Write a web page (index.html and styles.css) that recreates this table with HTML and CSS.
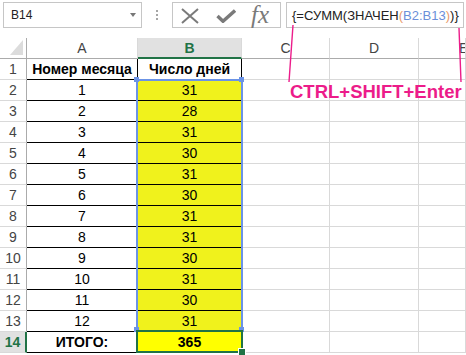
FILE: index.html
```html
<!DOCTYPE html>
<html>
<head>
<meta charset="utf-8">
<link rel="stylesheet" href="styles.css">
</head>
<body>
<div class="bar">
  <div class="namebox"><span>B14</span><span class="caret"></span></div>
  <div class="dots"><i></i><i></i><i></i></div>
  <div class="fn">
    <svg class="ico-x" width="18" height="16" viewBox="0 0 18 16"><path d="M1 1L17 15M17 1L1 15" stroke="#7a7a7a" stroke-width="2" fill="none"/></svg>
    <svg class="ico-ok" width="20" height="14" viewBox="0 0 20 14"><path d="M1.5 7L7 12.3L19 1.5" stroke="#7a7a7a" stroke-width="3.4" fill="none"/></svg>
    <span class="fx">fx</span>
  </div>
  <div class="formula"><span>{=СУММ(ЗНАЧЕН</span><span class="po">(</span><span class="rf">B2:B13</span><span class="po">)</span><span>)}</span></div>
</div>
<div class="sheet">
  <div class="c corner"><span class="tri"></span></div><div class="c ch">A</div><div class="c ch sel">B</div><div class="c ch">C</div><div class="c ch">D</div><div class="c ch last">E</div>
  <div class="c rh">1</div><div class="c t bold">Номер месяца</div><div class="c t bold">Число дней</div><div class="c"></div><div class="c"></div><div class="c"></div>
  <div class="c rh">2</div><div class="c t">1</div><div class="c t y">31</div><div class="c"></div><div class="c"></div><div class="c"></div>
  <div class="c rh">3</div><div class="c t">2</div><div class="c t y">28</div><div class="c"></div><div class="c"></div><div class="c"></div>
  <div class="c rh">4</div><div class="c t">3</div><div class="c t y">31</div><div class="c"></div><div class="c"></div><div class="c"></div>
  <div class="c rh">5</div><div class="c t">4</div><div class="c t y">30</div><div class="c"></div><div class="c"></div><div class="c"></div>
  <div class="c rh">6</div><div class="c t">5</div><div class="c t y">31</div><div class="c"></div><div class="c"></div><div class="c"></div>
  <div class="c rh">7</div><div class="c t">6</div><div class="c t y">30</div><div class="c"></div><div class="c"></div><div class="c"></div>
  <div class="c rh">8</div><div class="c t">7</div><div class="c t y">31</div><div class="c"></div><div class="c"></div><div class="c"></div>
  <div class="c rh">9</div><div class="c t">8</div><div class="c t y">31</div><div class="c"></div><div class="c"></div><div class="c"></div>
  <div class="c rh">10</div><div class="c t">9</div><div class="c t y">30</div><div class="c"></div><div class="c"></div><div class="c"></div>
  <div class="c rh">11</div><div class="c t">10</div><div class="c t y">31</div><div class="c"></div><div class="c"></div><div class="c"></div>
  <div class="c rh">12</div><div class="c t">11</div><div class="c t y">30</div><div class="c"></div><div class="c"></div><div class="c"></div>
  <div class="c rh">13</div><div class="c t">12</div><div class="c t y">31</div><div class="c"></div><div class="c"></div><div class="c"></div>
  <div class="c rh sel">14</div><div class="c t bold">ИТОГО:</div><div class="c t bold yy">365</div><div class="c"></div><div class="c"></div><div class="c"></div>
</div>
<div class="range-blue"></div>
<span class="hd hd-tl"></span><span class="hd hd-tr"></span><span class="hd hd-bl"></span><span class="hd hd-br"></span>
<div class="active"></div>
<span class="fill"></span>
<svg class="lines" width="466" height="355" viewBox="0 0 466 355"><path d="M293 25L289 82M459 28L461 82" stroke="#ec1c8a" stroke-width="1.4" fill="none"/></svg>
<div class="note">CTRL+SHIFT+Enter</div>
</body>
</html>
```
FILE: styles.css
```css
body {
  margin: 0;
  width: 466px;
  height: 355px;
  overflow: hidden;
  background: #fff;
  position: relative;
  font-family: "Liberation Sans", Arial, sans-serif;
}
.bar {
  display: flex;
  align-items: flex-start;
  height: 38px;
  box-sizing: border-box;
  padding-top: 2px;
}
.namebox {
  margin-left: 3px;
  width: 139px;
  height: 26px;
  box-sizing: border-box;
  border: 1px solid #c6c6c6;
  display: flex;
  align-items: center;
  justify-content: space-between;
  padding: 0 5px 0 7px;
  font-size: 12px;
  color: #222;
}
.caret {
  width: 0;
  height: 0;
  border-left: 3.5px solid transparent;
  border-right: 3.5px solid transparent;
  border-top: 4px solid #777;
}
.dots {
  width: 30px;
  display: flex;
  flex-direction: column;
  align-items: center;
  gap: 2px;
  padding-top: 8px;
}
.dots i {
  display: block;
  width: 2px;
  height: 2px;
  background: #a6a6a6;
}
.fn {
  width: 109px;
  height: 26px;
  box-sizing: border-box;
  border: 1px solid #c6c6c6;
  display: flex;
  align-items: center;
}
.ico-x { margin-left: 8px; margin-top: 2px; }
.ico-ok { margin-left: 17px; margin-top: 2px; }
.fx {
  margin-left: 15px;
  font-family: "Liberation Serif", "DejaVu Serif", serif;
  font-style: italic;
  font-size: 25px;
  color: #7a7a7a;
  line-height: 1;
  margin-top: -1px;
}
.formula {
  flex: 1;
  margin-left: 5px;
  margin-right: 2px;
  height: 26px;
  box-sizing: border-box;
  border: 1px solid #c6c6c6;
  padding-left: 5px;
  font-size: 13px;
  color: #222;
  display: flex;
  align-items: center;
  white-space: nowrap;
}
.po { color: #e99a6a; }
.rf { color: #6b8fd9; }
.sheet {
  display: grid;
  grid-template-columns: 27px 111px 104px 88px 89px 1fr;
  grid-auto-rows: 21px;
  overflow: hidden;
}
.c {
  box-sizing: border-box;
  border-right: 1px solid #d9d9d9;
  border-bottom: 1px solid #d9d9d9;
  display: flex;
  align-items: center;
  justify-content: center;
  font-size: 14px;
  color: #000;
  white-space: nowrap;
  overflow: hidden;
}
.corner {
  border-right-color: #ababab;
  border-bottom-color: #ababab;
  position: relative;
}
.tri {
  position: absolute;
  left: 10px;
  top: 2px;
  width: 0;
  height: 0;
  border-left: 13px solid transparent;
  border-bottom: 15px solid #dcdcdc;
}
.ch {
  border-bottom-color: #ababab;
  color: #444;
}
.ch.last {
  justify-content: flex-start;
  padding-left: 40px;
}
.ch.sel {
  background: #e1e1e1;
  color: #217346;
  font-weight: bold;
  border-bottom: 2px solid #217346;
}
.rh {
  border-right-color: #ababab;
  color: #444;
}
.rh.sel {
  background: #e1e1e1;
  color: #217346;
  font-weight: bold;
  border-right: 2px solid #217346;
}
.t {
  border-right-color: #000;
  border-bottom-color: #000;
}
.bold { font-weight: bold; }
.y { background: #f0f21c; }
.yy { background: #ffff00; }
.range-blue {
  position: absolute;
  left: 136px;
  top: 79px;
  width: 107px;
  height: 253px;
  box-sizing: border-box;
  border: 2px solid #6b93e6;
}
.hd {
  position: absolute;
  width: 5px;
  height: 5px;
  background: #6b93e6;
}
.hd-tl { left: 134px; top: 77px; }
.hd-tr { left: 239px; top: 77px; }
.hd-bl { left: 134px; top: 327px; }
.hd-br { left: 239px; top: 327px; }
.active {
  position: absolute;
  left: 136px;
  top: 330px;
  width: 107px;
  height: 23px;
  box-sizing: border-box;
  border: 2px solid #217346;
}
.fill {
  position: absolute;
  left: 238px;
  top: 348px;
  width: 6px;
  height: 6px;
  background: #217346;
  border: 1px solid #fff;
}
.lines {
  position: absolute;
  left: 0;
  top: 0;
}
.note {
  position: absolute;
  left: 290px;
  top: 83px;
  font-size: 18.5px;
  line-height: 18.5px;
  font-weight: bold;
  color: #ec1c8a;
  white-space: nowrap;
}
```
